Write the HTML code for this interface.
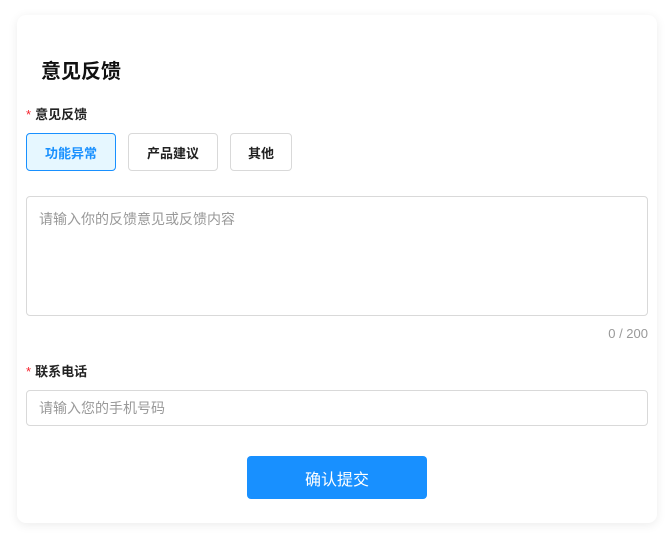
<!DOCTYPE html>
<html><head><meta charset="utf-8"><style>
*{box-sizing:border-box;margin:0;padding:0}
body{width:668px;height:541px;background:#fff;font-family:"Liberation Sans","Noto Sans CJK SC",sans-serif;position:relative;overflow:hidden}
.card{position:absolute;left:17px;top:15px;width:640px;height:508px;background:#fff;border-radius:9px;box-shadow:0 2px 10px rgba(0,0,0,.08)}
.a{position:absolute}
.title{left:41px;top:59px;font-size:20px;font-weight:bold;color:#111;line-height:26px}
.lbl{font-size:13px;font-weight:bold;color:#222;line-height:18px}
.lbl span{color:#f5222d;margin-right:4px;font-weight:normal}
.btn{height:38px;border:1px solid #d9d9d9;border-radius:4px;font-size:13px;font-weight:bold;color:#222;display:flex;align-items:center;justify-content:center;top:133px}
.sel{border-color:#1890ff;background:#e6f7ff;color:#1890ff}
.box{left:26px;width:622px;border:1px solid #d9d9d9;border-radius:4px;font-size:14px;color:#999;padding-left:12px}
</style></head><body>
<div class="card"></div>
<div class="a title">意见反馈</div>
<div class="a lbl" style="left:26px;top:106px"><span>*</span>意见反馈</div>
<div class="a btn sel" style="left:26px;width:90px">功能异常</div>
<div class="a btn" style="left:128px;width:90px">产品建议</div>
<div class="a btn" style="left:230px;width:62px">其他</div>
<div class="a box" style="top:196px;height:120px;padding-top:12px">请输入你的反馈意见或反馈内容</div>
<div class="a" style="right:20px;top:326px;font-size:13px;color:#999">0 / 200</div>
<div class="a lbl" style="left:26px;top:363px"><span>*</span>联系电话</div>
<div class="a box" style="top:390px;height:36px;line-height:34px">请输入您的手机号码</div>
<div class="a" style="left:247px;top:456px;width:180px;height:43px;background:#1890ff;border-radius:4px;color:#fff;font-size:16px;display:flex;align-items:center;justify-content:center">确认提交</div>
</body></html>
